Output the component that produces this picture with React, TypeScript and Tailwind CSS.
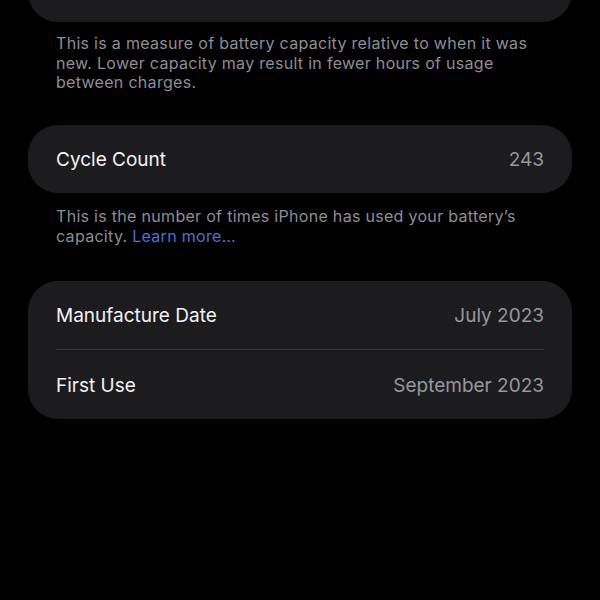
import React from "react";

const font = { fontFamily: "Inter, 'Noto Sans', sans-serif" };

function Row({ label, value, h = "h-[68px]" }: { label: string; value: string; h?: string }) {
  return (
    <div className={`flex ${h} items-center justify-between pt-[4px]`}>
      <span className="text-[19px] text-[#f2f2f4]">{label}</span>
      <span className="text-[19px] text-[#97979c]">{value}</span>
    </div>
  );
}

export default function App() {
  return (
    <div className="min-h-[600px] w-[600px] overflow-hidden bg-black" style={font}>
      <div className="px-[28px]">
        <div className="mt-[-46px] rounded-[30px] bg-[#1c1c1e] px-[28px]">
          <Row label="Maximum Capacity" value="85%" />
        </div>
        <p className="mt-[12px] px-[28px] text-[16px] leading-[19.5px] tracking-[0.3px] text-[#8e8e93]">
          This is a measure of battery capacity relative to when it was new. Lower capacity may result in fewer hours of usage between charges.
        </p>
        <div className="mt-[32px] rounded-[30px] bg-[#1c1c1e] px-[28px]">
          <Row label="Cycle Count" value="243" />
        </div>
        <p className="mt-[13px] px-[28px] text-[16px] leading-[20px] tracking-[0.3px] text-[#8e8e93]">
          This is the number of times iPhone has used your battery’s capacity.{" "}
          <span className="text-[#4a72d4]">Learn more…</span>
        </p>
        <div className="mt-[35px] rounded-[30px] bg-[#1c1c1e] px-[28px]">
          <Row label="Manufacture Date" value="July 2023" />
          <div className="h-px bg-[#38383a]" />
          <Row label="First Use" value="September 2023" h="h-[69px]" />
        </div>
      </div>
    </div>
  );
}
